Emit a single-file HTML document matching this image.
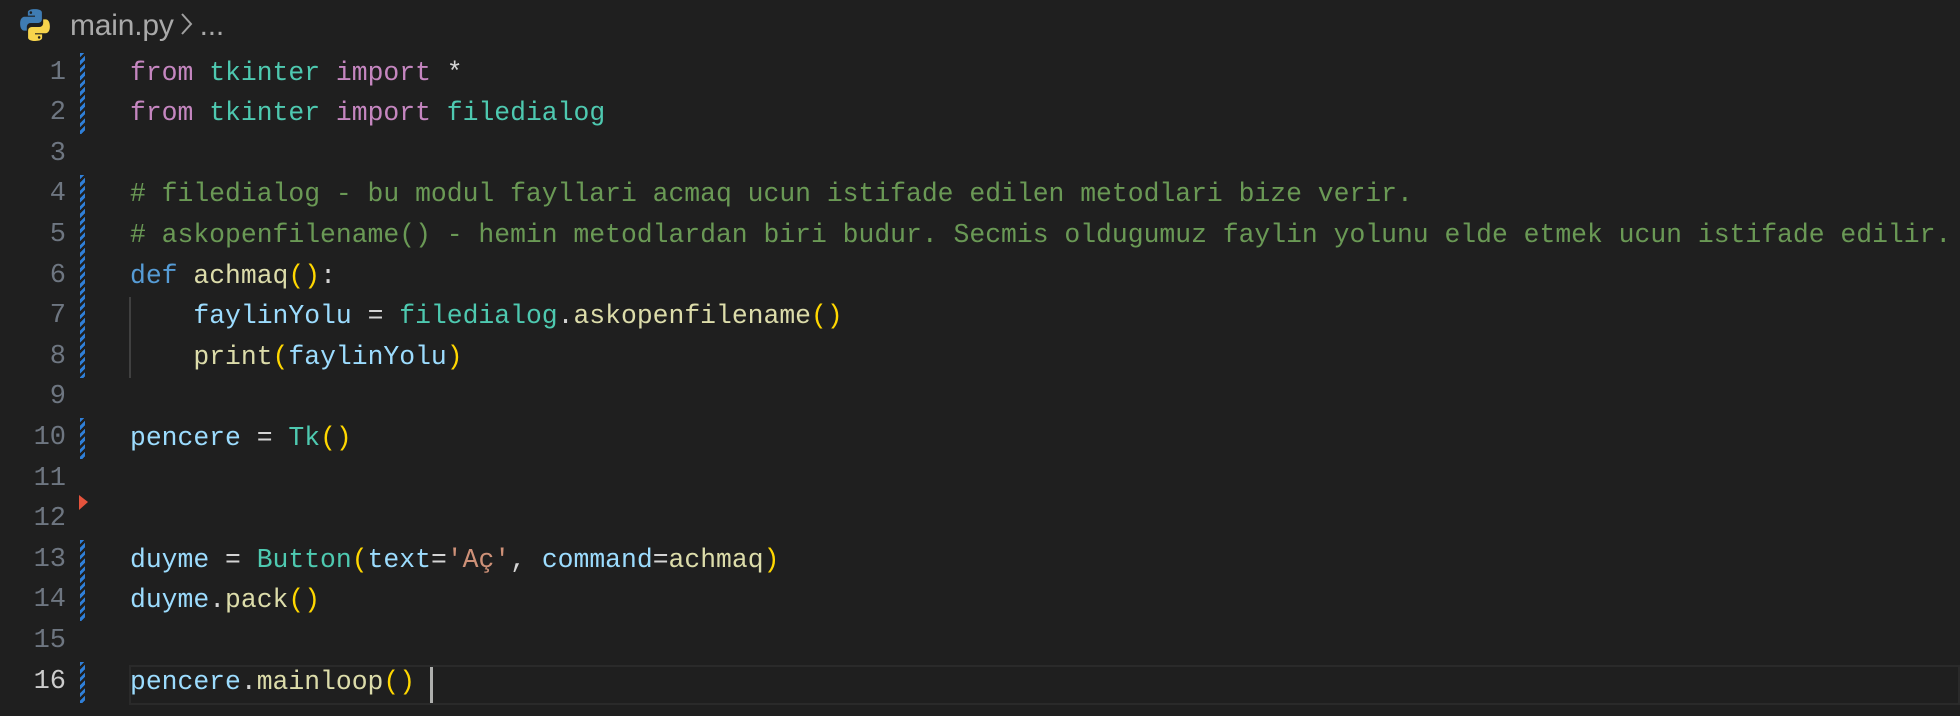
<!DOCTYPE html>
<html><head><meta charset="utf-8"><style>
html,body{margin:0;padding:0;width:1960px;height:716px;background:#1f1f1f;overflow:hidden}
.crumb{position:absolute;left:70px;top:6px;font-family:"Liberation Sans",sans-serif;font-size:30px;color:#a9a9a9;line-height:40px;letter-spacing:-0.2px}
.code{position:absolute;left:130px;top:52.7px;font-family:"Liberation Mono",monospace;font-size:26.4px;line-height:40.6px;white-space:pre;color:#d4d4d4}
.ln{position:absolute;left:0;width:66px;top:52.7px;text-align:right;font-family:"Liberation Mono",monospace;font-size:27px;line-height:40.6px;color:#6e7681;white-space:pre}
.k{color:#c586c0}.t{color:#4ec9b0}.v{color:#9cdcfe}.f{color:#dcdcaa}.c{color:#6a9955}.d{color:#569cd6}.b{color:#ffd700}.s{color:#ce9178}
.st{position:absolute;left:80px;width:5px;background:repeating-linear-gradient(135deg,#2f7fd8 0 3px,#1f1f1f 3px 5.5px)}
</style></head><body>
<svg style="position:absolute;left:18px;top:8px" width="34" height="34" viewBox="0 0 32 32">
<path d="M15.8 1C8.9 1 9.3 4 9.3 4v3.2h6.7v1H6.5S2 7.7 2 14.6s3.9 6.7 3.9 6.7h2.4v-3.3s-.1-3.9 3.9-3.9h6.6s3.7.1 3.7-3.6V4.4S23.1 1 15.8 1zm-3.7 2.1a1.2 1.2 0 1 1 0 2.4 1.2 1.2 0 0 1 0-2.4z" fill="#3f7cb3"/>
<path d="M16.2 31c6.9 0 6.5-3 6.5-3v-3.2H16v-1h9.5s4.5.5 4.5-6.4-3.9-6.7-3.9-6.7h-2.4V14s.1 3.9-3.9 3.9h-6.6s-3.7-.1-3.7 3.6v6.1S8.9 31 16.2 31zm3.7-2.1a1.2 1.2 0 1 1 0-2.4 1.2 1.2 0 0 1 0 2.4z" fill="#f7d44c"/>
</svg>
<div class="crumb">main.py<svg width="26" height="30" viewBox="0 0 26 30" style="vertical-align:-4px"><path d="M8 5L17 15L8 25" stroke="#a0a0a0" stroke-width="2" fill="none"/></svg>...</div>
<div style="position:absolute;left:129px;right:0;top:665px;height:40px;box-sizing:border-box;border:2px solid #2a2a2a"></div>
<div style="position:absolute;left:430px;top:667px;width:3px;height:36px;background:#aeafad"></div>
<div style="position:absolute;left:129px;top:297px;width:2px;height:81px;background:#404040"></div>
<div class="st" style="top:53px;height:81px"></div>
<div class="st" style="top:175px;height:203px"></div>
<div class="st" style="top:418px;height:41px"></div>
<div class="st" style="top:540px;height:81px"></div>
<div class="st" style="top:662px;height:41px"></div>
<svg style="position:absolute;left:79px;top:495px" width="10" height="16"><path d="M0 0L9 7L0 15z" fill="#e5533c"/></svg>
<div class="ln">1
2
3
4
5
6
7
8
9
10
11
12
13
14
15
<span style="color:#cccccc">16</span></div>
<div class="code"><span class="k">from</span> <span class="t">tkinter</span> <span class="k">import</span> *
<span class="k">from</span> <span class="t">tkinter</span> <span class="k">import</span> <span class="t">filedialog</span>

<span class="c"># filedialog - bu modul fayllari acmaq ucun istifade edilen metodlari bize verir.</span>
<span class="c"># askopenfilename() - hemin metodlardan biri budur. Secmis oldugumuz faylin yolunu elde etmek ucun istifade edilir.</span>
<span class="d">def</span> <span class="f">achmaq</span><span class="b">()</span>:
    <span class="v">faylinYolu</span> = <span class="t">filedialog</span>.<span class="f">askopenfilename</span><span class="b">()</span>
    <span class="f">print</span><span class="b">(</span><span class="v">faylinYolu</span><span class="b">)</span>

<span class="v">pencere</span> = <span class="t">Tk</span><span class="b">()</span>


<span class="v">duyme</span> = <span class="t">Button</span><span class="b">(</span><span class="v">text</span>=<span class="s">'Aç'</span>, <span class="v">command</span>=<span class="f">achmaq</span><span class="b">)</span>
<span class="v">duyme</span>.<span class="f">pack</span><span class="b">()</span>

<span class="v">pencere</span>.<span class="f">mainloop</span><span class="b">()</span></div>
</body></html>
